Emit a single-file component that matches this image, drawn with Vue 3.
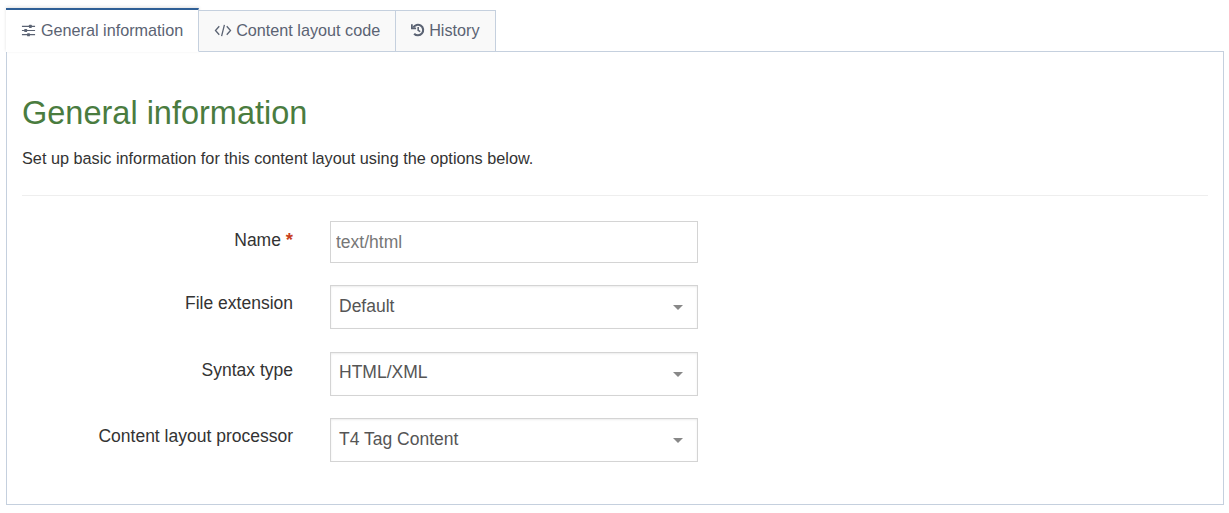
<template>
  <div class="page">
    <div class="tabs">
      <button v-for="tab in tabs" :key="tab.id" class="tab" :class="{ active: tab.id === activeTab }">
        <svg v-if="tab.id === 'general'" class="tab-icon" viewBox="0 0 16 16" fill="none" stroke="currentColor">
          <path d="M1 3.5h14M1 8h14M1 12.5h14" stroke-width="1.3" />
          <rect x="8.5" y="1.8" width="3" height="3.4" rx="0.6" fill="currentColor" stroke="none" />
          <rect x="3.5" y="6.3" width="3" height="3.4" rx="0.6" fill="currentColor" stroke="none" />
          <rect x="6.5" y="10.8" width="3" height="3.4" rx="0.6" fill="currentColor" stroke="none" />
        </svg>
        <svg v-else-if="tab.id === 'code'" class="tab-icon code" viewBox="0 0 18 16" fill="none" stroke="currentColor" stroke-width="1.4">
          <path d="M5 3.5L1 8l4 4.5M13 3.5L17 8l-4 4.5M10.5 2L7.5 14" />
        </svg>
        <svg v-else class="tab-icon history" viewBox="0 0 16 16" fill="none" stroke="currentColor" stroke-width="2.4">
          <path d="M2.6 5.2A6 6 0 1 1 3.6 12.2" />
          <path d="M1 1.4v4.8h4.8" stroke-width="2" />
          <path d="M8.2 4.6v3.8l2.4 1.5" stroke-width="1.8" />
        </svg>
        <span>{{ tab.label }}</span>
      </button>
    </div>

    <div class="panel">
      <h1 class="title">General information</h1>
      <p class="intro">Set up basic information for this content layout using the options below.</p>
      <hr class="divider" />

      <div class="form">
        <div class="row row-name">
          <label class="label">Name <span class="required">*</span></label>
          <input class="input" placeholder="text/html" />
        </div>
        <div v-for="field in selects" :key="field.label" class="row">
          <label class="label">{{ field.label }}</label>
          <div class="select">
            <span>{{ field.value }}</span>
            <i class="caret"></i>
          </div>
        </div>
      </div>
    </div>
  </div>
</template>

<script setup>
const activeTab = 'general'

const tabs = [
  { id: 'general', label: 'General information' },
  { id: 'code', label: 'Content layout code' },
  { id: 'history', label: 'History' }
]

const selects = [
  { label: 'File extension', value: 'Default' },
  { label: 'Syntax type', value: 'HTML/XML' },
  { label: 'Content layout processor', value: 'T4 Tag Content' }
]
</script>

<style scoped>
.page {
  padding: 8px 5px 0 6px;
  font-family: "Liberation Sans", Arial, sans-serif;
  font-size: 17.5px;
  color: #333;
}

.tabs {
  display: flex;
  align-items: flex-end;
  height: 44px;
  margin-bottom: -1px;
  position: relative;
  z-index: 1;
}

.tab {
  display: flex;
  align-items: center;
  gap: 4px;
  height: 42px;
  padding: 0 15px 2px 15px;
  background: #f9f9f9;
  border: 1px solid #c5d0de;
  border-left: none;
  font: inherit;
  font-size: 16.2px;
  color: #5b6373;
}

.tab.active {
  gap: 4px;
  height: 44px;
  padding: 0 15px 0 15px;
  background: #fff;
  border-top: 2px solid #2f5f96;
  border-bottom: 1px solid #fff;
  border-right-color: #c5d0de;
  box-shadow: 0 -1px 3px rgba(0, 0, 0, 0.12);
}

.tab-icon {
  width: 15px;
  height: 15px;
  flex: none;
}

.tab.active .tab-icon {
  margin-right: 1px;
}

.tab-icon.code {
  width: 18px;
}

.tab-icon.history {
  width: 14px;
  height: 14px;
}

.panel {
  height: 454px;
  box-sizing: border-box;
  padding: 42px 15px 0 15px;
  border: 1px solid #c5d0de;
  background: #fff;
}

.title {
  margin: 0;
  font-size: 32.5px;
  line-height: 38px;
  font-weight: 400;
  color: #4a7c3f;
}

.intro {
  margin: 16px 0 0;
  font-size: 16.26px;
  line-height: 20px;
  color: #333;
}

.divider {
  margin: 27px 0 0;
  border: none;
  border-top: 1px solid #eee;
}

.form {
  padding-top: 25px;
}

.row {
  display: flex;
  align-items: flex-start;
  gap: 37px;
  margin-bottom: 22.5px;
}

.row-name {
  margin-bottom: 22px;
}

.label {
  width: 271px;
  flex: none;
  box-sizing: border-box;
  padding-top: 8px;
  line-height: 20px;
  text-align: right;
}

.row-name .label {
  padding-top: 9px;
}

.required {
  color: #c8401e;
  font-weight: 700;
  font-size: 18.5px;
}

.input,
.select {
  width: 368px;
  box-sizing: border-box;
  border: 1px solid #d4d4d4;
  background: #fff;
  font: inherit;
  color: #555;
}

.input {
  height: 42px;
  padding: 0 5px;
  border-radius: 0;
  outline: none;
}

.input::placeholder {
  color: #777;
  opacity: 1;
}

.select {
  display: flex;
  align-items: center;
  justify-content: space-between;
  height: 44px;
  padding: 0 14px 2px 8px;
  box-shadow: inset 0 1px 2px rgba(0, 0, 0, 0.08);
}

.caret {
  width: 0;
  height: 0;
  margin-top: 3px;
  border-left: 5px solid transparent;
  border-right: 5px solid transparent;
  border-top: 5px solid #888;
}
</style>
